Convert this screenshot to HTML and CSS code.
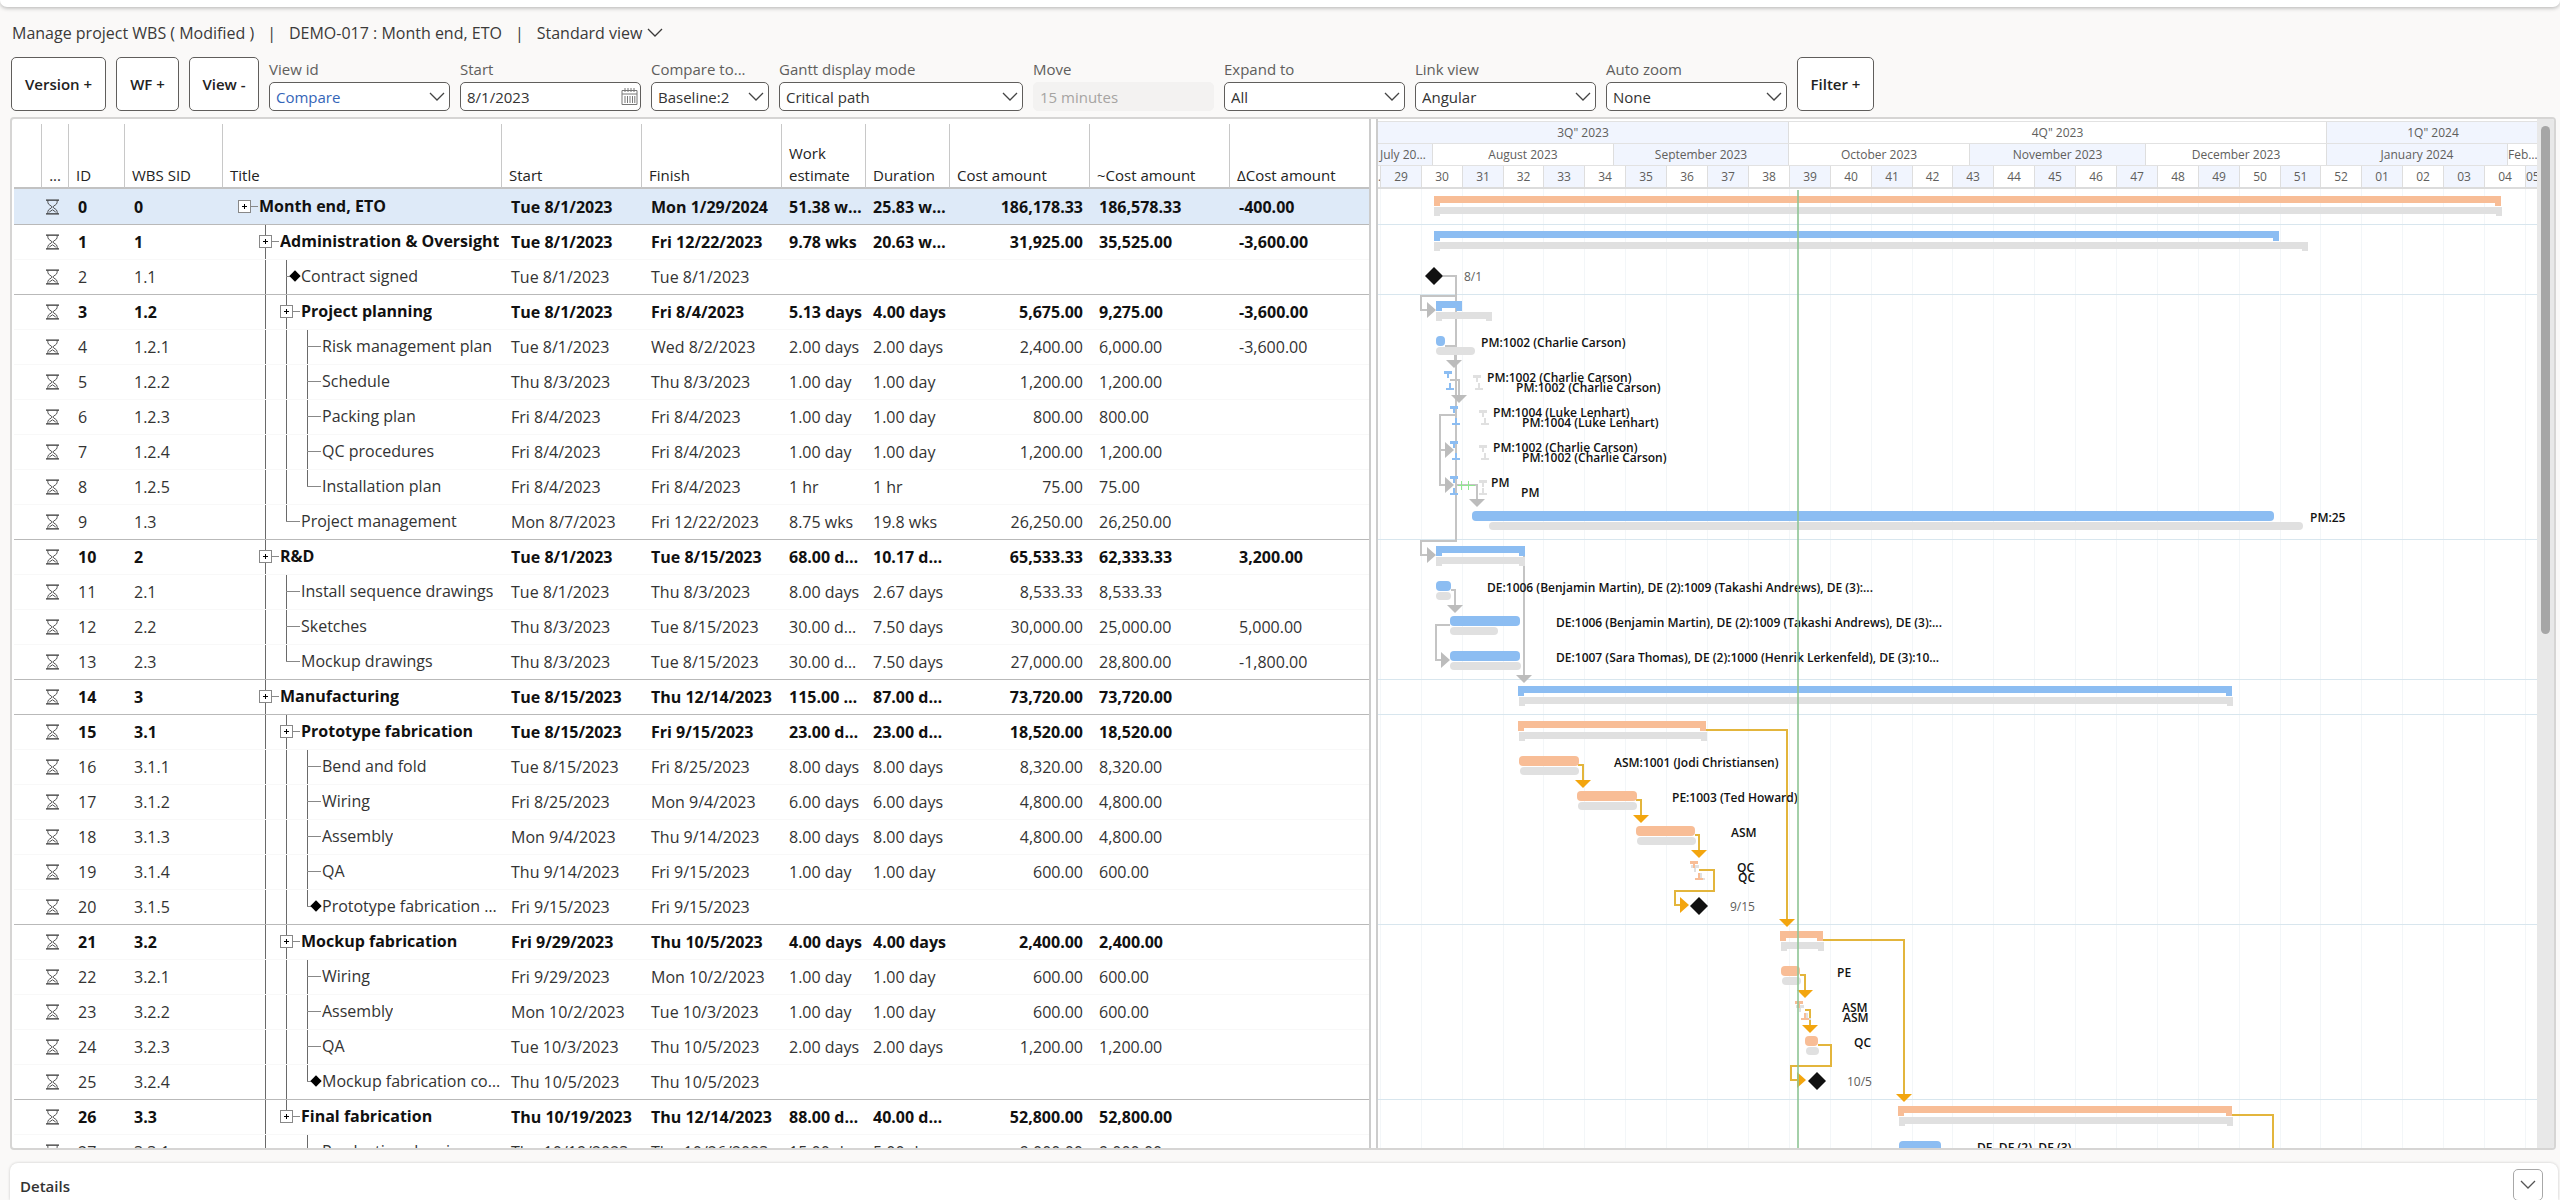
FILE: index.html
```html
<!DOCTYPE html>
<html lang="en">
<head>
<meta charset="utf-8">
<meta name="viewport" content="width=device-width, initial-scale=1">
<title>Manage project WBS</title>
<link rel="stylesheet" href="styles.css">
</head>
<body>
<svg class="defs" aria-hidden="true">
  <symbol id="chevron" viewBox="0 0 16 10"><path d="M1 1l7 7 7-7" fill="none" stroke="currentColor" stroke-width="1.3"/></symbol>
  <symbol id="hourglass" viewBox="0 0 14 16"><path d="M0 .7h14M0 15.300h14" stroke="currentColor" stroke-width="1.300"/><path d="M2 1v2c0 3 4.500 3.500 4.500 5s-4.500 2-4.500 5v2M12 1v2c0 3-4.500 3.500-4.500 5s4.500 2 4.500 5v2M3.500 13.500l3.500-2.500 3.500 2.500" fill="none" stroke="currentColor" stroke-width=".9"/></symbol>
  <symbol id="calendar" viewBox="0 0 17 17"><path d="M1 2.500h15v14H1zM1 6h15M4 0v4M7 0v4M10 0v4M13 0v4M4 8v7M6.500 8v7M9 8v7M11.500 8v7M13.800 8v7" fill="none" stroke="currentColor" stroke-width="1"/></symbol>
</svg>

<div class="topstrip"></div>

<header class="heading">
  <span>Manage project WBS ( Modified )</span>
  <span>|</span>
  <span>DEMO-017 : Month end, ETO</span>
  <span>|</span>
  <button class="view-menu" type="button">Standard view <svg><use href="#chevron"/></svg></button>
</header>

<form class="toolbar">
  <button class="tool tool-version" type="button">Version +</button>
  <button class="tool tool-wf" type="button">WF +</button>
  <button class="tool tool-view" type="button">View -</button>
  <div class="field">
    <label for="view-id">View id</label>
    <div class="control"><select id="view-id" class="link-value"><option>Compare</option></select><svg><use href="#chevron"/></svg></div>
  </div>
  <div class="field">
    <label for="start">Start</label>
    <div class="control"><input id="start" type="text" value="8/1/2023"><svg class="cal"><use href="#calendar"/></svg></div>
  </div>
  <div class="field field-narrow">
    <label for="compare">Compare to...</label>
    <div class="control"><select id="compare"><option>Baseline:2</option></select><svg><use href="#chevron"/></svg></div>
  </div>
  <div class="field field-wide">
    <label for="mode">Gantt display mode</label>
    <div class="control"><select id="mode"><option>Critical path</option></select><svg><use href="#chevron"/></svg></div>
  </div>
  <div class="field">
    <label for="move">Move</label>
    <div class="control"><input id="move" type="text" value="15 minutes" disabled></div>
  </div>
  <div class="field">
    <label for="expand">Expand to</label>
    <div class="control"><select id="expand"><option>All</option></select><svg><use href="#chevron"/></svg></div>
  </div>
  <div class="field">
    <label for="links">Link view</label>
    <div class="control"><select id="links"><option>Angular</option></select><svg><use href="#chevron"/></svg></div>
  </div>
  <div class="field">
    <label for="zoom">Auto zoom</label>
    <div class="control"><select id="zoom"><option>None</option></select><svg><use href="#chevron"/></svg></div>
  </div>
  <button class="tool tool-filter" type="button">Filter +</button>
</form>

<main class="workspace">
  <section class="grid-pane">
    <table class="wbs">
      <colgroup>
        <col class="c-mark"><col class="c-state"><col class="c-id"><col class="c-sid"><col class="c-title"><col class="c-date"><col class="c-date"><col class="c-work"><col class="c-dur"><col class="c-cost"><col class="c-cost"><col class="c-cost">
      </colgroup>
      <thead>
        <tr><th></th><th class="dots">...</th><th>ID</th><th>WBS SID</th><th>Title</th><th>Start</th><th>Finish</th><th>Work estimate</th><th>Duration</th><th>Cost amount</th><th>~Cost amount</th><th>ΔCost amount</th></tr>
      </thead>
      <tbody id="rows"></tbody>
    </table>
  </section>
  <section class="gantt-pane">
    <div class="timeline">
      <div class="scale" id="quarters"></div>
      <div class="scale" id="months"></div>
      <div class="scale" id="weeks"></div>
    </div>
    <svg class="chart" id="chart"></svg>
  </section>
  <div class="scrollbar"><div class="thumb"></div></div>
</main>

<footer class="details">
  <span>Details</span>
  <button type="button" aria-label="Expand details"><svg><use href="#chevron"/></svg></button>
</footer>
<script src="app.js"></script>
</body>
</html>
```
FILE: styles.css
```css
* { box-sizing: border-box; }

body {
  margin: 0;
  height: 100vh;
  display: flex;
  flex-direction: column;
  overflow: hidden;
  background: #faf9f8;
  color: #333;
  font: 15px/22px "Open Sans", "Noto Sans", sans-serif;
}

button, input, select { font: inherit; color: inherit; margin: 0; }
.defs { display: none; }

.topstrip {
  flex: none;
  height: 7px;
  background: #fff;
  border-radius: 0 0 8px 8px;
  box-shadow: 0 1px 4px rgba(0, 0, 0, .3);
}

.heading {
  display: flex;
  gap: 13px;
  padding: 15px 12px 13px;
  font-size: 16px;
  color: #3b3a39;
}
.view-menu {
  display: flex;
  align-items: center;
  gap: 5px;
  padding: 0;
  border: 0;
  background: none;
}
.view-menu svg { width: 16px; height: 10px; }

.toolbar { display: flex; gap: 10px; padding: 0 11px; }
.tool {
  flex: none;
  height: 54px;
  padding: 0;
  border: 1px solid #605e5c;
  border-radius: 5px;
  background: #fff;
  color: #222;
  font-weight: 600;
}
.tool-version { width: 95px; }
.tool-wf { width: 63px; }
.tool-view { width: 70px; }
.tool-filter { width: 77px; }

.field { display: flex; flex-direction: column; width: 181px; }
.field-narrow { width: 118px; }
.field-wide { width: 244px; }
.field label { height: 25px; line-height: 25px; color: #605e5c; }
.control { position: relative; }
.control select, .control input {
  display: block;
  width: 100%;
  height: 29px;
  padding: 0 6px;
  border: 1px solid #605e5c;
  border-radius: 5px;
  background: #fff;
  appearance: none;
}
.control .link-value { color: #3465b8; }
.control input:disabled { border-color: #f3f2f1; background: #f3f2f1; color: #a6a4a2; }
.control svg { position: absolute; right: 5px; top: 10px; width: 16px; height: 10px; pointer-events: none; color: #444; }
.control .cal { top: 6px; right: 3px; width: 17px; height: 17px; color: #777; }

.workspace {
  flex: 1;
  min-height: 0;
  display: flex;
  margin: 6px 4px 13px 10px;
  border: 2px solid #d6d5d4;
  border-radius: 4px;
  background: #fff;
  overflow: hidden;
}
.grid-pane { flex: none; width: 1359px; padding: 5px 2px 0; border-right: 2px solid #ccc; overflow: hidden; }

.wbs { width: 1353px; table-layout: fixed; border-collapse: separate; border-spacing: 0; }
.c-mark, .c-state { width: 27px; }
.c-id { width: 56px; }
.c-sid { width: 98px; }
.c-title { width: 279px; }
.c-date, .c-cost { width: 140px; }
.c-work { width: 84px; }
.c-dur { width: 84px; }
.wbs th {
  height: 65px;
  padding: 0 0 1px 7px;
  border-bottom: 2px solid #c2c2c2;
  border-left: 1px solid #c8c8c8;
  vertical-align: bottom;
  text-align: left;
  font-weight: 400;
  color: #222;
}
.wbs th:first-child { border-left: 0; }
.wbs th.dots { text-align: right; padding-right: 7px; }
.wbs td {
  height: 35px;
  padding: 0 0 1px 10px;
  border-top: 1px solid #f8f8f8;
  font-size: 16px;
  white-space: nowrap;
  overflow: hidden;
  text-overflow: ellipsis;
}
.wbs .state { padding: 0 0 0 5px; color: #333; }
.wbs .state svg { display: block; width: 13px; height: 16px; }
.wbs .effort { padding-left: 8px; }
.wbs .cost { padding: 0 6px 1px 0; text-align: right; }
.wbs .ruled td { border-top-color: #b9b9b9; }
.wbs .summary { font-weight: 700; color: #111; }
.wbs .selected td { background: #deeaf8; border-top-color: #deeaf8; }

.wbs td.title { padding: 0 0 0 12px; }
.tree { display: flex; align-items: stretch; height: 34px; line-height: 33px; }
.tree .name { min-width: 0; overflow: hidden; text-overflow: ellipsis; }
.guide { flex: none; position: relative; width: 21px; }
.guide.node { width: 25px; }
.guide.down::before, .guide.last::before {
  content: "";
  position: absolute;
  left: 10px;
  top: -1px;
  bottom: 0;
  border-left: 1px solid #6a6a6a;
}
.guide.last::before { bottom: 17px; }
.guide.node::after {
  content: "";
  position: absolute;
  left: 10px;
  top: 16px;
  width: 14px;
  border-top: 1px solid #888;
}
.guide button {
  position: absolute;
  z-index: 1;
  left: 4px;
  top: 10px;
  width: 13px;
  height: 13px;
  padding: 0;
  border: 1px solid #888;
  background: #fff;
}
.guide button::before, .guide button::after {
  content: "";
  position: absolute;
  left: 3px;
  top: 5px;
  width: 5px;
  height: 1px;
  background: #000;
}
.guide button::after { left: 5px; top: 3px; width: 1px; height: 5px; }
.guide i {
  position: absolute;
  z-index: 1;
  left: 15px;
  top: 12px;
  width: 8px;
  height: 8px;
  background: #000;
  transform: rotate(45deg);
}

.gantt-pane {
  flex: 1;
  min-width: 0;
  display: flex;
  flex-direction: column;
  margin-left: 5px;
  border-left: 2px solid #ccc;
  overflow: hidden;
}
.timeline {
  flex: none;
  margin-top: 2px;
  border-bottom: 2px solid #dcdcdc;
  font-size: 12px;
  line-height: 21px;
  color: #605e5c;
}
.scale { display: flex; height: 22px; border-top: 1px solid #e2e2e2; }
.scale div {
  flex: none;
  padding: 0 2px;
  border-right: 1px solid #dedede;
  text-align: center;
  white-space: nowrap;
  overflow: hidden;
  text-overflow: ellipsis;
}
.scale div:last-child { padding: 0; border-right: 0; }
#weeks div { padding: 0; text-overflow: clip; }
.scale .tint { background: #f1f5fe; }

.chart { display: block; flex: 1; width: 100%; min-height: 0; font-size: 12px; font-weight: 600; fill: #111; }
.chart .week { stroke: #f3f6f8; }
.chart .rule { stroke: #d8e6ee; }
.chart .now { stroke: #8ec594; stroke-width: 2; }
.chart .blue { fill: #8cbdf2; }
.chart .orange { fill: #f8bd96; }
.chart .base { fill: #e0e0e0; }
.chart .link { fill: none; stroke: #c4c4c4; stroke-width: 2; }
.chart .head { fill: #bcbcbc; }
.chart .link.critical { stroke: #e3b53c; }
.chart .head.critical { fill: #f3a50e; }
.chart .lag { fill: none; stroke: #90e890; stroke-width: 1; }
.chart .date { font-weight: 400; fill: #605e5c; }

.scrollbar { flex: none; width: 17px; padding: 7px 4px; background: #e8e8e8; }
.thumb { width: 9px; height: 50%; border-radius: 5px; background: #a6a6a6; }

.details {
  flex: none;
  display: flex;
  justify-content: space-between;
  height: 37px;
  margin: 0 2px 0 10px;
  padding: 6px 15px 0 10px;
  border-radius: 8px 8px 0 0;
  background: #fff;
  box-shadow: 0 0 3px rgba(0, 0, 0, .2);
  font-weight: 600;
  line-height: 35px;
}
.details button { width: 30px; height: 32px; padding: 0; border: 1px solid #a8a8a8; border-radius: 5px; background: #fff; color: #555; }
.details svg { display: block; width: 16px; height: 10px; margin: auto; }
```
FILE: app.js
```js
// id, wbs sid, depth, title, start, finish, work, duration, cost, baseline cost, delta, kind
const TASKS = [
  [0, "0", 0, "Month end, ETO", "Tue 8/1/2023", "Mon 1/29/2024", "51.38 wks", "25.83 wks", "186,178.33", "186,578.33", "-400.00", "S"],
  [1, "1", 1, "Administration & Oversight", "Tue 8/1/2023", "Fri 12/22/2023", "9.78 wks", "20.63 wks", "31,925.00", "35,525.00", "-3,600.00", "S"],
  [2, "1.1", 2, "Contract signed", "Tue 8/1/2023", "Tue 8/1/2023", "", "", "", "", "", "M"],
  [3, "1.2", 2, "Project planning", "Tue 8/1/2023", "Fri 8/4/2023", "5.13 days", "4.00 days", "5,675.00", "9,275.00", "-3,600.00", "S"],
  [4, "1.2.1", 3, "Risk management plan", "Tue 8/1/2023", "Wed 8/2/2023", "2.00 days", "2.00 days", "2,400.00", "6,000.00", "-3,600.00"],
  [5, "1.2.2", 3, "Schedule", "Thu 8/3/2023", "Thu 8/3/2023", "1.00 day", "1.00 day", "1,200.00", "1,200.00", ""],
  [6, "1.2.3", 3, "Packing plan", "Fri 8/4/2023", "Fri 8/4/2023", "1.00 day", "1.00 day", "800.00", "800.00", ""],
  [7, "1.2.4", 3, "QC procedures", "Fri 8/4/2023", "Fri 8/4/2023", "1.00 day", "1.00 day", "1,200.00", "1,200.00", ""],
  [8, "1.2.5", 3, "Installation plan", "Fri 8/4/2023", "Fri 8/4/2023", "1 hr", "1 hr", "75.00", "75.00", ""],
  [9, "1.3", 2, "Project management", "Mon 8/7/2023", "Fri 12/22/2023", "8.75 wks", "19.8 wks", "26,250.00", "26,250.00", ""],
  [10, "2", 1, "R&D", "Tue 8/1/2023", "Tue 8/15/2023", "68.00 days", "10.17 days", "65,533.33", "62,333.33", "3,200.00", "S"],
  [11, "2.1", 2, "Install sequence drawings", "Tue 8/1/2023", "Thu 8/3/2023", "8.00 days", "2.67 days", "8,533.33", "8,533.33", ""],
  [12, "2.2", 2, "Sketches", "Thu 8/3/2023", "Tue 8/15/2023", "30.00 days", "7.50 days", "30,000.00", "25,000.00", "5,000.00"],
  [13, "2.3", 2, "Mockup drawings", "Thu 8/3/2023", "Tue 8/15/2023", "30.00 days", "7.50 days", "27,000.00", "28,800.00", "-1,800.00"],
  [14, "3", 1, "Manufacturing", "Tue 8/15/2023", "Thu 12/14/2023", "115.00 days", "87.00 days", "73,720.00", "73,720.00", "", "S"],
  [15, "3.1", 2, "Prototype fabrication", "Tue 8/15/2023", "Fri 9/15/2023", "23.00 days", "23.00 days", "18,520.00", "18,520.00", "", "S"],
  [16, "3.1.1", 3, "Bend and fold", "Tue 8/15/2023", "Fri 8/25/2023", "8.00 days", "8.00 days", "8,320.00", "8,320.00", ""],
  [17, "3.1.2", 3, "Wiring", "Fri 8/25/2023", "Mon 9/4/2023", "6.00 days", "6.00 days", "4,800.00", "4,800.00", ""],
  [18, "3.1.3", 3, "Assembly", "Mon 9/4/2023", "Thu 9/14/2023", "8.00 days", "8.00 days", "4,800.00", "4,800.00", ""],
  [19, "3.1.4", 3, "QA", "Thu 9/14/2023", "Fri 9/15/2023", "1.00 day", "1.00 day", "600.00", "600.00", ""],
  [20, "3.1.5", 3, "Prototype fabrication complete", "Fri 9/15/2023", "Fri 9/15/2023", "", "", "", "", "", "M"],
  [21, "3.2", 2, "Mockup fabrication", "Fri 9/29/2023", "Thu 10/5/2023", "4.00 days", "4.00 days", "2,400.00", "2,400.00", "", "S"],
  [22, "3.2.1", 3, "Wiring", "Fri 9/29/2023", "Mon 10/2/2023", "1.00 day", "1.00 day", "600.00", "600.00", ""],
  [23, "3.2.2", 3, "Assembly", "Mon 10/2/2023", "Tue 10/3/2023", "1.00 day", "1.00 day", "600.00", "600.00", ""],
  [24, "3.2.3", 3, "QA", "Tue 10/3/2023", "Thu 10/5/2023", "2.00 days", "2.00 days", "1,200.00", "1,200.00", ""],
  [25, "3.2.4", 3, "Mockup fabrication complete", "Thu 10/5/2023", "Thu 10/5/2023", "", "", "", "", "", "M"],
  [26, "3.3", 2, "Final fabrication", "Thu 10/19/2023", "Thu 12/14/2023", "88.00 days", "40.00 days", "52,800.00", "52,800.00", "", "S"],
  [27, "3.3.1", 3, "Production drawings", "Thu 10/19/2023", "Thu 10/26/2023", "15.00 days", "5.00 days", "9,000.00", "9,000.00", ""]
];

// Does the branch line of the given depth carry on below this row?
function continues(row, depth) {
  if (depth === 1) return true;
  for (let i = row + 1; i < TASKS.length; i++) {
    if (TASKS[i][2] < depth) return false;
    if (TASKS[i][2] === depth) return true;
  }
  return TASKS[row][2] === depth && depth === 3 && row === TASKS.length - 1;
}

const esc = s => s.replace(/&/g, "&amp;");

document.getElementById("rows").innerHTML = TASKS.map((t, row) => {
  const [id, sid, depth, title, start, finish, work, dur, cost, base, delta, kind] = t;
  let tree = "";
  for (let d = 0; d < depth; d++) {
    tree += `<span class="guide${d > 0 && continues(row, d) ? " down" : ""}"></span>`;
  }
  const line = depth === 0 ? "" : continues(row, depth) ? " down" : " last";
  const mark = kind === "S" ? `<button type="button" aria-label="Expand"></button>` : kind === "M" ? "<i></i>" : "";
  tree += `<span class="guide node${line}">${mark}</span><span class="name">${esc(title)}</span>`;
  const cls = (kind === "S" ? "summary" : "") + (kind === "S" && row > 0 ? " ruled" : "") + (row === 0 ? " selected" : "");
  return `<tr class="${cls}"><td></td><td class="state"><svg><use href="#hourglass"/></svg></td><td>${id}</td><td>${sid}</td>` +
    `<td class="title"><div class="tree">${tree}</div></td><td>${start}</td><td>${finish}</td><td class="effort">${work}</td><td class="effort">${dur}</td>` +
    `<td class="cost">${cost}</td><td>${base}</td><td>${delta}</td></tr>`;
}).join("");

// Time scale: the pane opens on day 0; one day is DAY pixels wide.
const DAY = 5.842;
const ROW = 35;
function fillScale(id, cells, tintFirst) {
  let day = 0;
  document.getElementById(id).innerHTML = cells.map(([label, days], i) => {
    const width = Math.round((day + days) * DAY) - Math.round(day * DAY);
    day += days;
    return `<div class="${(i % 2 === 0) === tintFirst ? "tint" : ""}" style="width:${width}px">${label}</div>`;
  }).join("");
}
fillScale("quarters", [['3Q" 2023', 70.4], ['4Q" 2023', 92], ['1Q" 2024', 36.4]], true);
fillScale("months", [["July 2023", 9.4], ["August 2023", 31], ["September 2023", 30], ["October 2023", 31],
  ["November 2023", 30], ["December 2023", 31], ["January 2024", 31], ["February 2024", 5.6]], true);
const weeks = [[".", 0.5]];
for (let w = 29; w <= 57; w++) weeks.push([String(w > 52 ? w - 52 : w).padStart(2, "0"), 7]);
weeks[weeks.length - 1][1] = 2.3;
fillScale("weeks", weeks, false);

// Chart shapes, in row-relative vertical positions.
const out = [];
const summary = (row, cls, x1, x2, b1, b2) => {
  const y = row * ROW;
  out.push(`<path class="${cls}" d="M${x1} ${y + 7}H${x2}v10h-6v-3H${x1 + 6}v3h-6z"/>`);
  out.push(`<path class="base" d="M${b1} ${y + 18}H${b2}v9h-6v-2H${b1 + 6}v2h-6z"/>`);
};
const task = (row, cls, x1, x2, b1, b2) => {
  const y = row * ROW;
  out.push(`<rect class="${cls}" x="${x1}" y="${y + 7}" width="${x2 - x1}" height="10" rx="4"/>`);
  if (b2) out.push(`<rect class="base" x="${b1}" y="${y + 18}" width="${b2 - b1}" height="8" rx="4"/>`);
};
// Short tasks are drawn as a pair of facing T marks.
const tee = (row, cls, top, x1, x2) => {
  const y = row * ROW;
  out.push(`<path class="${cls}" d="M${x1} ${y + top}h8v3h-3v4h-2v-4h-3zM${x2} ${y + 26}v-2h3v-5h2v5h3v2z"/>`);
};
const label = (row, x, text, dy = 18, cls = "") => out.push(`<text class="${cls}" x="${x}" y="${row * ROW + dy}">${text}</text>`);
const milestone = (row, x) => out.push(`<path d="M${x} ${row * ROW + 8}l9 9-9 9-9-9z"/>`);
const link = (d, cls = "") => out.push(`<path class="link ${cls}" d="${d}"/>`);
const headDown = (x, y, cls = "") => out.push(`<path class="head ${cls}" d="M${x - 8} ${y}h16l-8 8z"/>`);
const headRight = (x, y, cls = "") => out.push(`<path class="head ${cls}" d="M${x - 9} ${y - 8}l9 8-9 8z"/>`);

for (let i = 0; i < 29; i++) {
  const x = Math.round((0.5 + i * 7) * DAY) - 0.5;
  out.push(`<path class="week" d="M${x} 0V1400"/>`);
}
TASKS.forEach((t, row) => {
  if (row > 0 && t[11] === "S") out.push(`<path class="rule" d="M0 ${row * ROW + 0.5}H4000"/>`);
});

link("M65 87H78V107H43V121H50"); headRight(58, 121);
link("M78 107V352H43V366H50"); headRight(58, 366);
link("M67 157H77V172"); headDown(76, 171);
link("M72 191H81V206"); headDown(81, 206);
link("M77 226H62V296H68M62 261H68"); headRight(76, 261); headRight(76, 296);
link("M78 296H99V311"); headDown(99, 310);
link("M146 366V487"); headDown(146, 486);
link("M73 401H77V417"); headDown(77, 416);
link("M72 436H58V471H64"); headRight(72, 471);
const C = "critical";
link("M328 541H409V731", C); headDown(409, 730, C);
link("M200 576H205V592", C); headDown(205, 591, C);
link("M258 611H263V627", C); headDown(263, 626, C);
link("M317 646H321V662", C); headDown(321, 661, C);
link("M321 681H336V702H297V716H303", C); headRight(311, 716, C);
link("M445 751H526V906", C); headDown(526, 905, C);
link("M422 786H427V802", C); headDown(427, 801, C);
link("M427 821H432V837", C); headDown(432, 836, C);
link("M440 856H453V877H413V891H420", C); headRight(428, 891, C);
link("M854 926H895V1000", C);
out.push('<path class="lag" d="M80 296.500H97M83.500 292v9M90.500 292v9"/>');

summary(0, "orange", 56, 1123, 56, 1124);
summary(1, "blue", 56, 901, 56, 930);
milestone(2, 56); label(2, 86, "8/1", 22, "date");
summary(3, "blue", 58, 84, 58, 114);
task(4, "blue", 58, 67, 58, 97); label(4, 103, "PM:1002 (Charlie Carson)");
tee(5, "base", 11, 95, 97); tee(5, "blue", 7, 66, 68);
label(5, 109, "PM:1002 (Charlie Carson)"); label(5, 138, "PM:1002 (Charlie Carson)", 28);
tee(6, "base", 11, 101, 103); tee(6, "blue", 7, 72, 74);
label(6, 115, "PM:1004 (Luke Lenhart)"); label(6, 144, "PM:1004 (Luke Lenhart)", 28);
tee(7, "base", 11, 101, 103); tee(7, "blue", 7, 72, 74);
label(7, 115, "PM:1002 (Charlie Carson)"); label(7, 144, "PM:1002 (Charlie Carson)", 28);
tee(8, "base", 11, 101, 101); tee(8, "blue", 7, 72, 72);
label(8, 113, "PM"); label(8, 143, "PM", 28);
task(9, "blue", 94, 896, 111, 925); label(9, 932, "PM:25");
summary(10, "blue", 58, 147, 58, 147);
task(11, "blue", 58, 73, 58, 73); label(11, 109, "DE:1006 (Benjamin Martin), DE (2):1009 (Takashi Andrews), DE (3):...");
task(12, "blue", 72, 142, 72, 120); label(12, 178, "DE:1006 (Benjamin Martin), DE (2):1009 (Takashi Andrews), DE (3):...");
task(13, "blue", 72, 142, 72, 143); label(13, 178, "DE:1007 (Sara Thomas), DE (2):1000 (Henrik Lerkenfeld), DE (3):10...");
summary(14, "blue", 140, 854, 141, 855);
summary(15, "orange", 140, 328, 141, 329);
task(16, "orange", 141, 201, 142, 201); label(16, 236, "ASM:1001 (Jodi Christiansen)");
task(17, "orange", 199, 259, 200, 259); label(17, 294, "PE:1003 (Ted Howard)");
task(18, "orange", 258, 317, 259, 318); label(18, 353, "ASM");
tee(19, "base", 11, 313, 319); tee(19, "orange", 7, 312, 317); label(19, 359, "QC"); label(19, 360, "QC", 28);
milestone(20, 321); label(20, 352, "9/15", 22, "date");
summary(21, "orange", 402, 445, 403, 446);
task(22, "orange", 403, 422, 404, 423); label(22, 459, "PE");
tee(23, "base", 11, 418, 425); tee(23, "orange", 7, 417, 423); label(23, 464, "ASM"); label(23, 465, "ASM", 28);
task(24, "orange", 427, 440, 428, 441); label(24, 476, "QC");
milestone(25, 439); label(25, 469, "10/5", 22, "date");
summary(26, "orange", 520, 854, 521, 855);
task(27, "blue", 521, 563); label(27, 599, "DE, DE (2), DE (3)");
out.push('<path class="now" opacity=".8" d="M420 1V1400"/>');

document.getElementById("chart").innerHTML = out.join("");
```
